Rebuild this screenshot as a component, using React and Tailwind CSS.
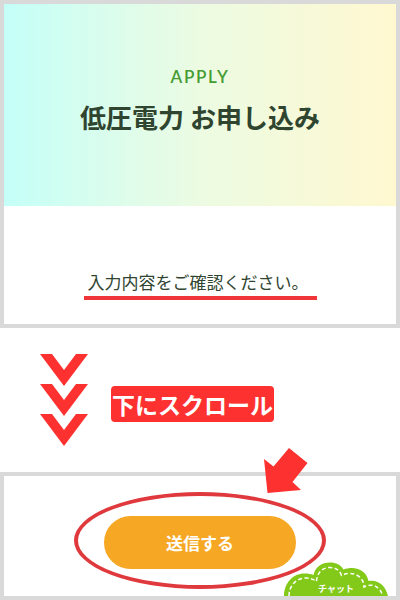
const arrowTips = [0, 30, 60];

function PageHeader() {
  return (
    <header className="bg-linear-to-r from-[#c4fff8] via-[#ecfbe2] to-[#fff8d0] px-4 pt-[61px] pb-[69px] text-center">
      <p className="font-['Lato',sans-serif] text-[17px] leading-6 font-semibold tracking-widest text-[#459c33]">
        APPLY
      </p>
      <h1 className="mt-2 text-[26px] leading-10 font-bold text-[#2f4530]">低圧電力 お申し込み</h1>
    </header>
  );
}

function ScrollArrows() {
  return (
    <svg viewBox="0 0 48 92" className="h-[92px] w-12 fill-[#fe3131]" aria-hidden="true">
      {arrowTips.map((y) => (
        <path key={y} d="M0 0H12L24 16L36 0H48L24 32Z" transform={`translate(0 ${y})`} />
      ))}
    </svg>
  );
}

function PointerArrow() {
  return (
    <svg
      viewBox="0 0 44 45"
      className="absolute -top-7 left-1/2 ml-16 h-[45px] w-11 fill-[#fe3131]"
      aria-hidden="true"
    >
      <path d="M25 0L43.5 15L28.5 34L37 42L3.5 45L0 11L9.5 18.5Z" />
    </svg>
  );
}

function ChatButton() {
  return (
    <button
      type="button"
      className="absolute right-2 bottom-0 h-[34px] w-[104px] overflow-hidden text-[9px] leading-3 font-bold text-white"
    >
      <svg viewBox="0 0 104 34" className="absolute inset-0 h-full w-full" aria-hidden="true">
        <path
          d="M0 34C0 20 10 11 21 11.5C24 11.5 27 12 29.5 13C31 5 38 0.5 46 0.5C52 0.5 57 3 59.5 7.5C62 6.5 65 6 68 6C76 6 83 11 84.5 19C94 17 102 24 104 34Z"
          fill="#82c919"
        />
        <path
          d="M5 34C5 24 12 16 22 16C26 16 29 17 32.5 19.5C33 11 38 5.5 46 5.5C52 5.5 56 8.5 57.5 13.5C68 8 80 14 80 25C89 20 97 26 98.5 34"
          fill="none"
          stroke="#fff"
          strokeWidth="1.5"
          strokeDasharray="4 2.5"
        />
      </svg>
      <span className="relative block pt-5">チャット</span>
    </button>
  );
}

export default function App() {
  return (
    <main className="min-h-screen bg-white font-['Noto_Sans_CJK_JP',sans-serif]">
      <section className="border-4 border-[#d9d9d9]">
        <PageHeader />
        <div className="flex justify-center pt-[62px] pb-6">
          <p className="border-b-4 border-[#ef3537] pr-2 pl-1 text-[17px] leading-7 text-[#2f4530]">
            入力内容をご確認ください。
          </p>
        </div>
      </section>

      <div className="flex items-end gap-[23px] px-10 py-[26px]">
        <ScrollArrows />
        <p className="mb-6 rounded-[4px] bg-[#fe3131] px-px text-[23px] leading-9 font-bold text-white">
          下にスクロール
        </p>
      </div>

      <section className="relative border-4 border-[#d9d9d9]">
        <form
          className="flex justify-center pt-10 pb-[27px]"
          onSubmit={(event) => event.preventDefault()}
        >
          <div className="relative">
            <button
              type="submit"
              className="h-[53px] w-48 rounded-full bg-[#f6a724] text-[17px] font-bold text-white"
            >
              送信する
            </button>
            <div className="pointer-events-none absolute -inset-x-[30px] -top-6 -bottom-5 rounded-[50%] border-4 border-[#e0393d]" />
          </div>
        </form>
        <PointerArrow />
        <ChatButton />
      </section>
    </main>
  );
}
